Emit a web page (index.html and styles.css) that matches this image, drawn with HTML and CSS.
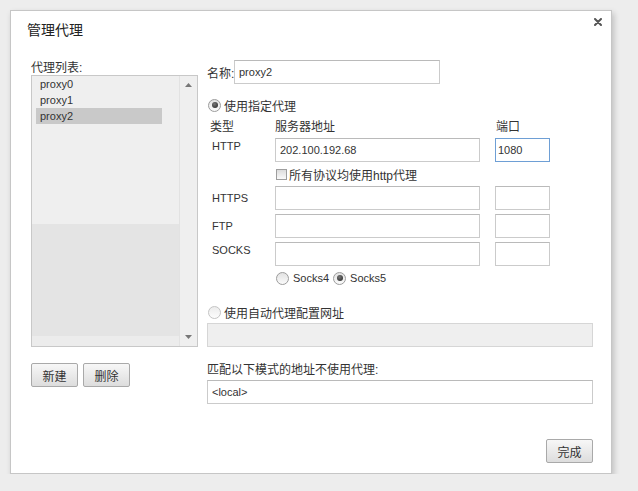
FILE: index.html
```html
<!DOCTYPE html>
<html lang="zh-CN">
<head>
  <meta charset="UTF-8">
  <title>管理代理</title>
  <link rel="stylesheet" href="styles.css">
</head>
<body>
  <div class="dialog">
    <div class="dialog-head">
      <h1 class="dialog-title">管理代理</h1>
      <svg class="close" width="8" height="8" viewBox="0 0 8 8">
        <path d="M1 1 L7 7 M7 1 L1 7" stroke="#555" stroke-width="2" stroke-linecap="round"/>
      </svg>
    </div>

    <div class="dialog-body">
      <div class="list-col">
        <div class="list-label">代理列表:</div>
        <div class="listbox">
          <div class="list-items">
            <div class="item en">proxy0</div>
            <div class="item en">proxy1</div>
            <div class="item en selected">proxy2</div>
          </div>
          <div class="scrollbar">
            <svg width="7" height="4" viewBox="0 0 7 4"><path d="M0 4 L3.5 0 L7 4 Z" fill="#777"/></svg>
            <svg width="7" height="4" viewBox="0 0 7 4"><path d="M0 0 L3.5 4 L7 0 Z" fill="#777"/></svg>
          </div>
        </div>
        <div class="list-actions">
          <button class="btn">新建</button>
          <button class="btn">删除</button>
        </div>
      </div>

      <div class="form-col">
        <div class="name-row">
          <label class="name-label">名称:</label>
          <input class="field name-field en" value="proxy2">
        </div>

        <div class="choice">
          <span class="radio on"></span>
          <span>使用指定代理</span>
        </div>

        <div class="proxy-grid">
          <span class="col-head type-head">类型</span>
          <span class="col-head">服务器地址</span>
          <span class="col-head port-head">端口</span>

          <span class="proto top en">HTTP</span>
          <input class="field en" value="202.100.192.68">
          <input class="field port focus en" value="1080">

          <div class="span-row">
            <span class="check"></span>
            <span>所有协议均使用http代理</span>
          </div>

          <span class="proto en">HTTPS</span>
          <input class="field">
          <input class="field port">

          <span class="proto en">FTP</span>
          <input class="field">
          <input class="field port">

          <span class="proto top en">SOCKS</span>
          <input class="field">
          <input class="field port">

          <div class="span-row socks-row">
            <span class="radio"></span>
            <span class="en">Socks4</span>
            <span class="radio on"></span>
            <span class="en">Socks5</span>
          </div>
        </div>

        <div class="choice auto-choice">
          <span class="radio dim"></span>
          <span>使用自动代理配置网址</span>
        </div>
        <input class="field wide disabled" disabled>

        <div class="bypass-label">匹配以下模式的地址不使用代理:</div>
        <input class="field wide bypass en" value="<local>">

        <div class="footer">
          <button class="btn">完成</button>
        </div>
      </div>
    </div>
  </div>
</body>
</html>
```

FILE: styles.css
```css
* { box-sizing: border-box; }
body {
  margin: 0;
  background: #ededed;
  font-family: "Liberation Sans", "Noto Sans CJK SC", sans-serif;
  font-size: 12px;
  color: #333;
}
.en { font-size: 11px; }

.dialog {
  margin: 10px 0 0 10px;
  width: 602px;
  height: 464px;
  background: #fff;
  border: 1px solid #c6c6c6;
  box-shadow: 2px 3px 6px rgba(0, 0, 0, 0.2);
  display: flex;
  flex-direction: column;
}

.dialog-head {
  display: flex;
  justify-content: space-between;
  align-items: flex-start;
}
.dialog-title {
  margin: 9px 0 0 16px;
  font-size: 14px;
  line-height: 20px;
  font-weight: normal;
  color: #222;
}
.close { margin: 7px 9px 0 0; }

.dialog-body {
  display: flex;
  gap: 9px;
  padding: 20px 0 0 20px;
}

/* left: proxy list */
.list-col {
  width: 167px;
  padding-top: 1px;
}
.list-label { line-height: 14px; }
.listbox {
  height: 272px;
  border: 1px solid #c8c8c8;
  display: flex;
  background: #efefef;
}
.list-items {
  flex: 1;
  padding-left: 4px;
  background: linear-gradient(#efefef 0 148px, #e4e4e4 148px calc(100% - 10px), #ececec calc(100% - 10px));
}
.item {
  width: 126px;
  height: 16px;
  line-height: 16px;
  padding-left: 4px;
  color: #333;
}
.item.selected { background: #c9c9c9; }
.scrollbar {
  width: 18px;
  display: flex;
  flex-direction: column;
  justify-content: space-between;
  align-items: center;
  padding: 7px 0;
  border-left: 1px solid #e2e2e2;
}
.list-actions {
  display: flex;
  gap: 5px;
  margin-top: 16px;
}

.btn {
  width: 47px;
  height: 24px;
  padding: 0;
  border: 1px solid #a9a9a9;
  border-radius: 2px;
  background: linear-gradient(#f7f7f7, #dddddd);
  font: inherit;
  color: #333;
}

/* right: form */
.form-col { width: 386px; }

.field {
  height: 24px;
  min-width: 0;
  border: 1px solid #cbcbcb;
  border-top-color: #bababa;
  padding: 0 4px;
  font-family: inherit;
  color: #333;
  background: #fff;
  outline: none;
}
.field.focus { border-color: #6e9fd5; }
.field.port { padding-left: 2px; }
.field.wide { width: 100%; display: block; }
.field.disabled { background: #efefef; border-color: #d6d6d6; }

.name-row {
  display: flex;
  align-items: center;
}
.name-label {
  flex-shrink: 0;
  width: 27px;
  white-space: nowrap;
}
.name-field { width: 206px; }

.choice {
  display: flex;
  align-items: center;
  gap: 3px;
  height: 16px;
  margin-top: 13px;
  padding-left: 1px;
}
.auto-choice { margin-top: 18px; }
.auto-choice + .field { margin-top: 3px; }

.radio {
  width: 13px;
  height: 13px;
  border-radius: 50%;
  border: 1px solid #9c9c9c;
  background: linear-gradient(#e2e2e2, #fbfbfb);
  display: inline-flex;
  align-items: center;
  justify-content: center;
}
.radio.on::after {
  content: "";
  width: 6px;
  height: 6px;
  border-radius: 50%;
  background: radial-gradient(circle at 40% 35%, #777, #222);
}
.radio.dim { border-color: #c4c4c4; background: linear-gradient(#ececec, #fdfdfd); }

.check {
  width: 11px;
  height: 11px;
  border: 1px solid #9e9e9e;
  background: linear-gradient(#dcdcdc, #fafafa);
}

.proxy-grid {
  display: grid;
  grid-template-columns: 53px 205px 55px;
  column-gap: 15px;
  row-gap: 4px;
  margin-top: 7px;
  align-items: center;
}
.col-head { line-height: 14px; }
.type-head { padding-left: 3px; }
.port-head { padding-left: 1px; }
.proto {
  padding-left: 5px;
  line-height: 14px;
}
.proto.top { align-self: start; padding-top: 1px; }
.span-row {
  grid-column: 2 / span 2;
  display: flex;
  align-items: center;
  gap: 2px;
  height: 16px;
  padding-left: 1px;
}
.socks-row { gap: 4px; }

.bypass-label {
  margin-top: 16px;
  line-height: 14px;
}
.bypass { margin-top: 3px; }

.footer {
  display: flex;
  justify-content: flex-end;
  margin-top: 35px;
}
```
